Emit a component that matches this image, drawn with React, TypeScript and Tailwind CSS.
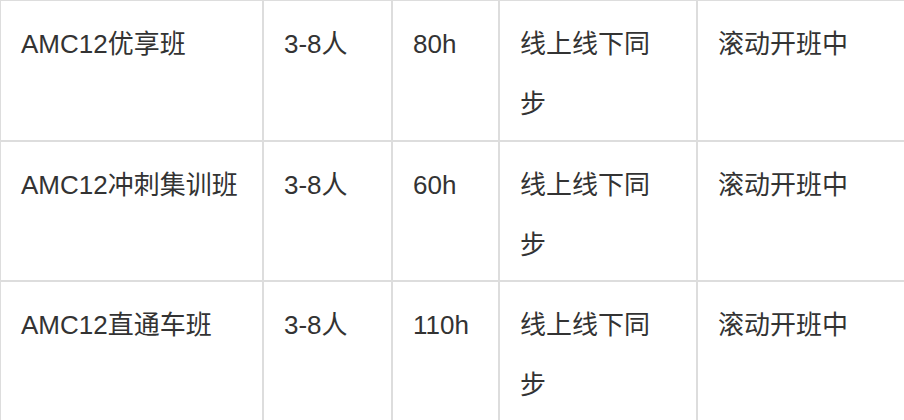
import React from "react";

const rows = [
  ["AMC12优享班", "3-8人", "80h", "线上线下同步", "滚动开班中"],
  ["AMC12冲刺集训班", "3-8人", "60h", "线上线下同步", "滚动开班中"],
  ["AMC12直通车班", "3-8人", "110h", "线上线下同步", "滚动开班中"],
];

export default function App() {
  return (
    <div
      className="w-[904px] h-[420px] overflow-hidden bg-white text-[#333333] text-[26px] leading-[60px]"
      style={{ fontFamily: '"Liberation Sans", "Noto Sans CJK SC", sans-serif' }}
    >
      <div className="grid grid-cols-[263px_129px_107px_198px_240px] w-[937px]">
        {rows.map((r, i) => (
          <React.Fragment key={i}>
            {r.map((c, j) => (
              <div
                key={j}
                className={
                  "border border-[#dddddd] pl-5 pt-[13px] pb-[5.5px] " +
                  (j === 3 ? "pr-[26px]" : "pr-5")
                }
              >
                {c}
              </div>
            ))}
          </React.Fragment>
        ))}
      </div>
    </div>
  );
}
